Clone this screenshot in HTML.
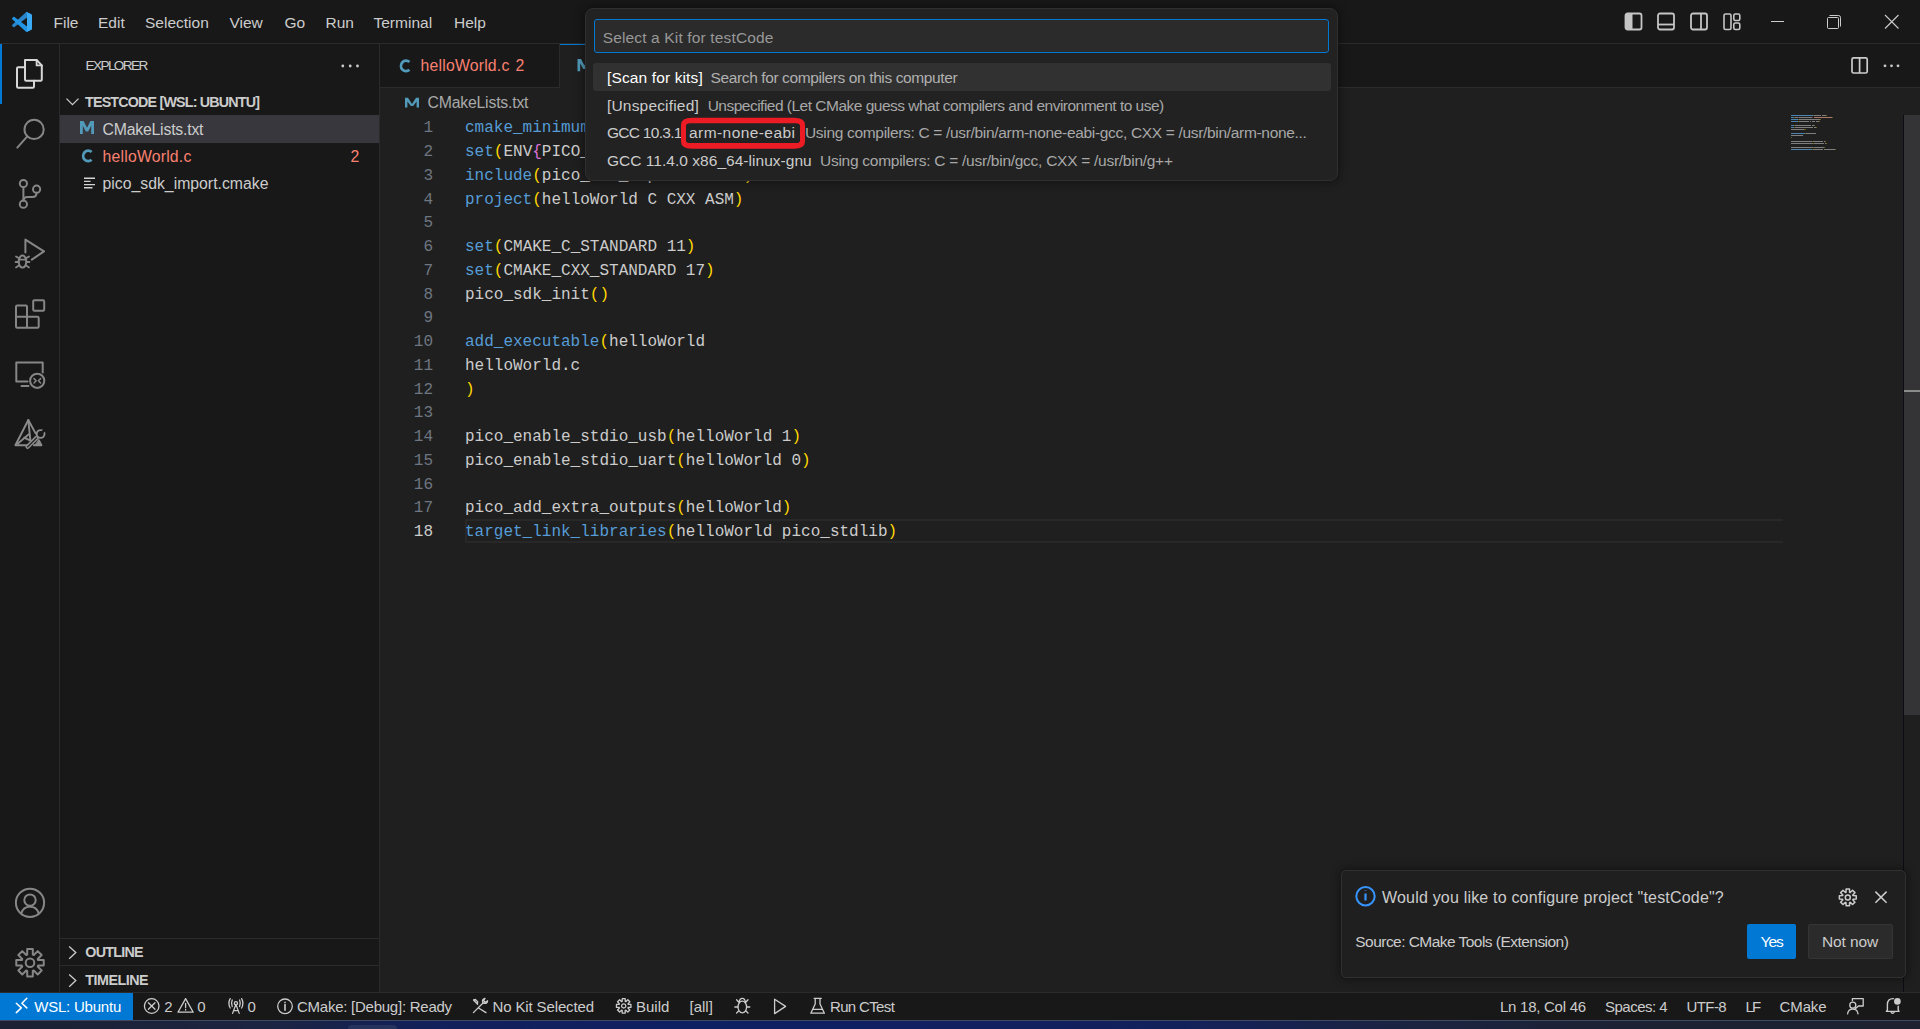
<!DOCTYPE html>
<html><head><meta charset="utf-8">
<style>
*{box-sizing:border-box;margin:0;padding:0}
html,body{width:1920px;height:1029px;overflow:hidden;background:#181818}
body{position:relative;font-family:"Liberation Sans",sans-serif;color:#cccccc}
.a{position:absolute}
.t{position:absolute;white-space:pre;line-height:1;font-family:"Liberation Sans",sans-serif}
.m{position:absolute;white-space:pre;line-height:1;font-family:"Liberation Mono",monospace;font-size:16px}
svg{position:absolute;overflow:visible}
</style></head><body>

<!-- TITLE BAR -->
<div class="a" style="left:0;top:0;width:1920px;height:43px;background:#181818"></div>
<div class="a" style="left:0;top:43px;width:1920px;height:1px;background:#2b2b2b"></div>
<svg style="left:12px;top:12px" width="20" height="20" viewBox="0 0 100 100">
  <path d="M96.46 10.8 L75.84 0.87 C73.45 -0.28 70.6 0.2 68.74 2.07 L1.34 63.59 C-0.48 65.24 -0.48 68.1 1.35 69.75 L6.86 74.76 C8.35 76.11 10.58 76.21 12.18 75 L93.48 13.33 C96.21 11.26 100.13 13.2 100.13 16.62 V16.38 C100.13 13.98 98.75 11.8 96.46 10.8 Z" fill="#2a86cc"/>
  <path d="M96.46 89.2 L75.84 99.13 C73.45 100.28 70.6 99.8 68.74 97.93 L1.34 36.41 C-0.48 34.76 -0.48 31.9 1.35 30.25 L6.86 25.24 C8.35 23.89 10.58 23.79 12.18 25 L93.48 86.67 C96.21 88.74 100.13 86.8 100.13 83.38 V83.62 C100.13 86.02 98.75 88.2 96.46 89.2 Z" fill="#2196e6"/>
  <path d="M75.84 99.14 C73.45 100.29 70.6 99.8 68.74 97.94 C71.05 100.25 75 98.61 75 95.35 V4.65 C75 1.39 71.05 -0.25 68.74 2.06 C70.6 0.2 73.45 -0.29 75.84 0.86 L96.46 10.78 C98.62 11.82 100 14.01 100 16.41 V83.59 C100 85.99 98.62 88.18 96.46 89.22 Z" fill="#3aaaf5"/>
</svg>
<div class="t" style="left:53.5px;top:14.5px;font-size:15.5px;letter-spacing:0px">File</div>
<div class="t" style="left:98px;top:14.5px;font-size:15.5px;letter-spacing:0px">Edit</div>
<div class="t" style="left:145px;top:14.5px;font-size:15.5px;letter-spacing:0px">Selection</div>
<div class="t" style="left:229.5px;top:14.5px;font-size:15.5px;letter-spacing:0px">View</div>
<div class="t" style="left:284.5px;top:14.5px;font-size:15.5px;letter-spacing:0px">Go</div>
<div class="t" style="left:325.5px;top:14.5px;font-size:15.5px;letter-spacing:0px">Run</div>
<div class="t" style="left:373.5px;top:14.5px;font-size:15.5px;letter-spacing:0px">Terminal</div>
<div class="t" style="left:454px;top:14.5px;font-size:15.5px;letter-spacing:0px">Help</div>
<!-- layout icons -->
<svg style="left:1624px;top:11.6px" width="20" height="20" viewBox="0 0 20 20" fill="none" stroke="#c5c5c5" stroke-width="1.8">
  <rect x="1.5" y="1.5" width="16" height="16" rx="2"/><rect x="1.5" y="1.5" width="7" height="16" fill="#c5c5c5" stroke="none" rx="1"/>
</svg>
<svg style="left:1657px;top:11.6px" width="20" height="20" viewBox="0 0 20 20" fill="none" stroke="#c5c5c5" stroke-width="1.8">
  <rect x="1" y="1.5" width="16" height="16" rx="2"/><line x1="1" y1="12.5" x2="17" y2="12.5"/>
</svg>
<svg style="left:1689.5px;top:11.6px" width="20" height="20" viewBox="0 0 20 20" fill="none" stroke="#c5c5c5" stroke-width="1.8">
  <rect x="1" y="1.5" width="16" height="16" rx="2"/><line x1="11" y1="1.5" x2="11" y2="17.5"/>
</svg>
<svg style="left:1723px;top:11.6px" width="20" height="20" viewBox="0 0 20 20" fill="none" stroke="#c5c5c5" stroke-width="1.6">
  <rect x="1" y="2" width="7" height="15.5" rx="1.5"/><rect x="10.8" y="2" width="6" height="6.5" rx="1.5"/><rect x="10.8" y="11" width="6" height="6.5" rx="1.5"/>
</svg>
<!-- window controls -->
<div class="a" style="left:1771px;top:21px;width:13px;height:1px;background:#cccccc"></div>
<svg style="left:1826px;top:14px" width="16" height="16" viewBox="0 0 16 16" fill="none" stroke="#cccccc" stroke-width="1">
  <rect x="1.5" y="3.5" width="11" height="11" rx="1"/><path d="M3.5 1.5 H12.5 Q14.5 1.5 14.5 3.5 V12.5"/>
</svg>
<svg style="left:1884px;top:14px" width="16" height="16" viewBox="0 0 16 16" fill="none" stroke="#cccccc" stroke-width="1.1">
  <path d="M1 1 L14.5 14.5 M14.5 1 L1 14.5"/>
</svg>

<!-- ACTIVITY BAR -->
<div class="a" style="left:0;top:44px;width:59px;height:948px;background:#181818"></div>
<div class="a" style="left:59px;top:44px;width:1px;height:948px;background:#2b2b2b"></div>
<div class="a" style="left:0;top:44px;width:2px;height:60px;background:#0078d4"></div>
<svg style="left:0;top:44px" width="59" height="948" viewBox="0 44 59 948" fill="none" stroke="#868686" stroke-width="2" stroke-linecap="round" stroke-linejoin="round">
  <!-- explorer (active) -->
  <g stroke="#d7d7d7">
    <path d="M25 60 H36.6 L41.8 65.4 V79.6 Q41.8 80.8 40.6 80.8 H26.2 Q25 80.8 25 79.6 Z"/>
    <path d="M36.6 60 V65.4 H41.8" stroke-width="1.8"/>
    <path d="M25 67.2 H18.2 Q17 67.2 17 68.4 V86.6 Q17 87.8 18.2 87.8 H32.8 Q34 87.8 34 86.6 V80.8"/>
  </g>
  <!-- search -->
  <circle cx="34.1" cy="129.4" r="9.6"/>
  <path d="M27.3 136.4 L17.3 147.6"/>
  <!-- scm -->
  <circle cx="23.4" cy="183.6" r="3.6"/>
  <circle cx="36.6" cy="189.2" r="3.6"/>
  <circle cx="23.4" cy="204.2" r="3.6"/>
  <path d="M23.4 187.2 V200.6"/>
  <path d="M36.6 192.8 Q36.6 197 32.4 197 H27.4 Q23.6 197 23.4 200.6"/>
  <!-- debug -->
  <path d="M25.4 252.4 V239.6 L44 251.4 L31.8 259.6"/>
  <ellipse cx="22.5" cy="261.6" rx="3.8" ry="6"/>
  <path d="M18.7 259.6 H26.3 M16 256.4 L18.6 258 M29 256.4 L26.4 258 M15.6 262 H18.6 M29.4 262 H26.4 M16 267.4 L18.8 265.6 M29 267.4 L26.2 265.6" stroke-width="1.8"/>
  <!-- extensions -->
  <rect x="33.2" y="300.2" width="11" height="10.6" rx="1.2"/>
  <path d="M16 306.7 Q16 305.5 17.2 305.5 H25.8 Q27 305.5 27 306.7 V316.8 H37.5 Q38.7 316.8 38.7 318 V326.6 Q38.7 327.8 37.5 327.8 H17.2 Q16 327.8 16 326.6 Z M16 316.8 H27 V327.8"/>
  <!-- remote explorer -->
  <path d="M27.5 381.6 H16.3 V362.6 H42.7 V372.6"/>
  <path d="M21.5 385.9 H28.5"/>
  <circle cx="37.2" cy="380.8" r="7.1"/>
  <path d="M34 378.6 L36.2 380.8 L34 383 M40.6 378.6 L38.4 380.8 L40.6 383" stroke-width="1.5"/>
  <!-- cmake -->
  <g stroke="#8c8c8c" stroke-width="1.9">
    <path d="M28.3 420 L15.4 445.2 H26.5 M33.8 445.2 H41.4 L38.8 440.2 M28.3 420 L35.6 433.4"/>
    <path d="M28.3 420 L30.4 440.6 M17.8 443.6 L28.8 434.2 M24.2 437.6 L30.4 440.6"/>
    <path d="M35.2 445.2 H41.2 L38.6 440.4 Z" fill="#8c8c8c" stroke-width="1"/>
    <path d="M27.6 446.8 L36.6 437.8" stroke-width="4.4"/>
    <path d="M27.6 446.8 L36.6 437.8" stroke="#181818" stroke-width="1.2"/>
    <circle cx="40.6" cy="434" r="3.9"/>
    <path d="M41.4 433.2 L45.6 429" stroke="#181818" stroke-width="2.6"/>
  </g>
  <!-- account -->
  <circle cx="30" cy="902.8" r="14.1"/>
  <circle cx="30" cy="900.1" r="5.7"/>
  <path d="M21.3 913.4 Q23.2 906.8 30 906.8 Q36.8 906.8 38.7 913.4"/>
  <!-- manage gear -->
  <g transform="translate(30 962.8)">
    <path d="M-2.80 -8.13 L-2.79 -13.72 L2.79 -13.72 L2.80 -8.13 L3.77 -7.73 L7.73 -11.67 L11.67 -7.73 L7.73 -3.77 L8.13 -2.80 L13.72 -2.79 L13.72 2.79 L8.13 2.80 L7.73 3.77 L11.67 7.73 L7.73 11.67 L3.77 7.73 L2.80 8.13 L2.79 13.72 L-2.79 13.72 L-2.80 8.13 L-3.77 7.73 L-7.73 11.67 L-11.67 7.73 L-7.73 3.77 L-8.13 2.80 L-13.72 2.79 L-13.72 -2.79 L-8.13 -2.80 L-7.73 -3.77 L-11.67 -7.73 L-7.73 -11.67 L-3.77 -7.73 Z"/>
    <circle r="4.3"/>
  </g>
</svg>

<!-- SIDEBAR -->
<div class="a" style="left:60px;top:44px;width:319px;height:948px;background:#181818"></div>
<div class="a" style="left:379px;top:44px;width:1px;height:948px;background:#2b2b2b"></div>
<div class="t" style="left:85.5px;top:59px;font-size:13.6px;letter-spacing:-1.6px">EXPLORER</div>
<svg style="left:340px;top:62px" width="20" height="8" viewBox="340 62 20 8" fill="#cccccc">
  <circle cx="342.8" cy="66" r="1.4"/><circle cx="350.2" cy="66" r="1.4"/><circle cx="357.5" cy="66" r="1.4"/>
</svg>
<svg style="left:62px;top:94px" width="20" height="16" viewBox="62 94 20 16" fill="none" stroke="#cccccc" stroke-width="1.3">
  <path d="M66.5 98.6 L72.5 104.6 L78.5 98.6"/>
</svg>
<div class="t" style="left:85px;top:94.7px;font-size:14.3px;font-weight:700;letter-spacing:-0.82px">TESTCODE [WSL: UBUNTU]</div>
<div class="a" style="left:60px;top:115px;width:319px;height:28px;background:#37373d"></div>
<svg style="left:78px;top:118px" width="20" height="80" viewBox="78 118 20 80">
  <path d="M80 134 V121 H83.6 L87 127.8 L90.4 121 H94 V134 H91.2 V125.8 L88.2 131.6 H85.8 L82.8 125.8 V134 Z" fill="#519aba"/>
  <path d="M91.6 152 A5 5.3 0 1 0 91.6 159.8" fill="none" stroke="#519aba" stroke-width="2.8"/>
  <path d="M84 178.2 H95 M84 181.4 H90.5 M84 184.6 H95 M84 187.8 H92.5" stroke="#d4d4d4" stroke-width="1.4"/>
</svg>
<div class="t" style="left:102.5px;top:121.7px;font-size:15.8px;letter-spacing:-0.2px">CMakeLists.txt</div>
<div class="t" style="left:102.5px;top:148.7px;font-size:15.8px;letter-spacing:0.2px;color:#f88070">helloWorld.c</div>
<div class="t" style="left:350.5px;top:148.7px;font-size:15.8px;color:#f88070">2</div>
<div class="t" style="left:102.5px;top:176.2px;font-size:15.8px;letter-spacing:0px">pico_sdk_import.cmake</div>
<!-- outline / timeline -->
<div class="a" style="left:60px;top:938px;width:319px;height:1px;background:#2b2b2b"></div>
<div class="a" style="left:60px;top:965px;width:319px;height:1px;background:#2b2b2b"></div>
<svg style="left:62px;top:940px" width="24" height="52" viewBox="62 940 24 52" fill="none" stroke="#cccccc" stroke-width="1.3">
  <path d="M69.2 946.5 L75.8 952.6 L69.2 958.7 M69.2 974.5 L75.8 980.6 L69.2 986.7"/>
</svg>
<div class="t" style="left:85.3px;top:945px;font-size:14.3px;font-weight:700;letter-spacing:-0.75px">OUTLINE</div>
<div class="t" style="left:85.3px;top:973px;font-size:14.3px;font-weight:700;letter-spacing:-0.5px">TIMELINE</div>

<!-- EDITOR -->
<div class="a" style="left:380px;top:44px;width:1540px;height:43px;background:#181818"></div>
<div class="a" style="left:380px;top:87px;width:1540px;height:1px;background:#2b2b2b"></div>
<div class="a" style="left:380px;top:88px;width:1540px;height:904px;background:#1f1f1f"></div>

<!-- tabs -->
<div class="a" style="left:559px;top:44px;width:1px;height:43px;background:#2b2b2b"></div>
<div class="a" style="left:560px;top:44px;width:201px;height:44px;background:#1f1f1f;border-top:1px solid #0078d4"></div>
<svg style="left:396px;top:56px" width="20" height="20" viewBox="396 56 20 20">
  <path d="M409.4 62 A5 5.3 0 1 0 409.4 69.8" fill="none" stroke="#519aba" stroke-width="2.8"/>
</svg>
<div class="t" style="left:420.5px;top:58.4px;font-size:15.8px;letter-spacing:0.2px;color:#f88070">helloWorld.c</div>
<div class="t" style="left:515.5px;top:58.4px;font-size:15.8px;color:#f88070">2</div>
<svg style="left:575px;top:56.7px" width="20" height="20" viewBox="575 56 20 20">
  <path d="M577.5 70.2 V58 H581 L584.4 64.6 L587.8 58 H591.4 V70.2 H588.6 V62.6 L585.6 68 H583.2 L580.2 62.6 V70.2 Z" fill="#519aba"/>
</svg>
<!-- editor actions -->
<svg style="left:1848px;top:54px" width="24" height="24" viewBox="1848 54 24 24" fill="none" stroke="#cccccc" stroke-width="1.7">
  <rect x="1852" y="57.8" width="15.2" height="15.2" rx="1.6"/><line x1="1859.6" y1="57.8" x2="1859.6" y2="73"/>
</svg>
<svg style="left:1880px;top:62px" width="24" height="8" viewBox="1880 62 24 8" fill="#cccccc">
  <circle cx="1885" cy="65.8" r="1.4"/><circle cx="1891.5" cy="65.8" r="1.4"/><circle cx="1898" cy="65.8" r="1.4"/>
</svg>
<!-- breadcrumbs -->
<svg style="left:402px;top:94px" width="20" height="20" viewBox="402 94 20 20">
  <path d="M405 107.5 V97.7 H408 L412 104 L416 97.7 H419 V107.5 H416.6 V101.4 L413.2 106 H410.8 L407.4 101.4 V107.5 Z" fill="#519aba"/>
</svg>
<div class="t" style="left:427.5px;top:94.5px;font-size:15.8px;letter-spacing:-0.2px;color:#a9a9a9">CMakeLists.txt</div>
<!-- scrollbar -->
<div class="a" style="left:1903px;top:115px;width:1px;height:877px;background:#0b0d12"></div>
<div class="a" style="left:1904px;top:115px;width:16px;height:600px;background:#343437"></div>
<div class="a" style="left:1904px;top:390px;width:16px;height:2px;background:#8a8c8c"></div>
<!-- current line -->
<div class="a" style="left:465px;top:519px;width:1318px;height:24px;border:2px solid #282828;border-right:0"></div>
<div class="m" style="left:400px;top:120.34px;width:33px;text-align:right;color:#6e7681">1</div>
<div class="m" style="left:465px;top:120.34px;color:#cccccc"><span style="color:#569cd6">cmake_minimum_required</span><span style="color:#ffd700">(</span>VERSION 3.13<span style="color:#ffd700">)</span></div>
<div class="m" style="left:400px;top:144.09px;width:33px;text-align:right;color:#6e7681">2</div>
<div class="m" style="left:465px;top:144.09px;color:#cccccc"><span style="color:#569cd6">set</span><span style="color:#ffd700">(</span>ENV<span style="color:#da70d6">{</span>PICO_SDK_PATH<span style="color:#da70d6">}</span> <span style="color:#ce9178">"../pico/pico-sdk"</span><span style="color:#ffd700">)</span></div>
<div class="m" style="left:400px;top:167.84px;width:33px;text-align:right;color:#6e7681">3</div>
<div class="m" style="left:465px;top:167.84px;color:#cccccc"><span style="color:#569cd6">include</span><span style="color:#ffd700">(</span>pico_sdk_import.cmake<span style="color:#ffd700">)</span></div>
<div class="m" style="left:400px;top:191.59px;width:33px;text-align:right;color:#6e7681">4</div>
<div class="m" style="left:465px;top:191.59px;color:#cccccc"><span style="color:#569cd6">project</span><span style="color:#ffd700">(</span>helloWorld C CXX ASM<span style="color:#ffd700">)</span></div>
<div class="m" style="left:400px;top:215.34px;width:33px;text-align:right;color:#6e7681">5</div>
<div class="m" style="left:400px;top:239.09px;width:33px;text-align:right;color:#6e7681">6</div>
<div class="m" style="left:465px;top:239.09px;color:#cccccc"><span style="color:#569cd6">set</span><span style="color:#ffd700">(</span>CMAKE_C_STANDARD 11<span style="color:#ffd700">)</span></div>
<div class="m" style="left:400px;top:262.84px;width:33px;text-align:right;color:#6e7681">7</div>
<div class="m" style="left:465px;top:262.84px;color:#cccccc"><span style="color:#569cd6">set</span><span style="color:#ffd700">(</span>CMAKE_CXX_STANDARD 17<span style="color:#ffd700">)</span></div>
<div class="m" style="left:400px;top:286.59px;width:33px;text-align:right;color:#6e7681">8</div>
<div class="m" style="left:465px;top:286.59px;color:#cccccc">pico_sdk_init<span style="color:#ffd700">()</span></div>
<div class="m" style="left:400px;top:310.34px;width:33px;text-align:right;color:#6e7681">9</div>
<div class="m" style="left:400px;top:334.09px;width:33px;text-align:right;color:#6e7681">10</div>
<div class="m" style="left:465px;top:334.09px;color:#cccccc"><span style="color:#569cd6">add_executable</span><span style="color:#ffd700">(</span>helloWorld</div>
<div class="m" style="left:400px;top:357.84px;width:33px;text-align:right;color:#6e7681">11</div>
<div class="m" style="left:465px;top:357.84px;color:#cccccc">helloWorld.c</div>
<div class="m" style="left:400px;top:381.59px;width:33px;text-align:right;color:#6e7681">12</div>
<div class="m" style="left:465px;top:381.59px;color:#cccccc"><span style="color:#ffd700">)</span></div>
<div class="m" style="left:400px;top:405.34px;width:33px;text-align:right;color:#6e7681">13</div>
<div class="m" style="left:400px;top:429.09px;width:33px;text-align:right;color:#6e7681">14</div>
<div class="m" style="left:465px;top:429.09px;color:#cccccc">pico_enable_stdio_usb<span style="color:#ffd700">(</span>helloWorld 1<span style="color:#ffd700">)</span></div>
<div class="m" style="left:400px;top:452.84px;width:33px;text-align:right;color:#6e7681">15</div>
<div class="m" style="left:465px;top:452.84px;color:#cccccc">pico_enable_stdio_uart<span style="color:#ffd700">(</span>helloWorld 0<span style="color:#ffd700">)</span></div>
<div class="m" style="left:400px;top:476.59px;width:33px;text-align:right;color:#6e7681">16</div>
<div class="m" style="left:400px;top:500.34px;width:33px;text-align:right;color:#6e7681">17</div>
<div class="m" style="left:465px;top:500.34px;color:#cccccc">pico_add_extra_outputs<span style="color:#ffd700">(</span>helloWorld<span style="color:#ffd700">)</span></div>
<div class="m" style="left:400px;top:524.09px;width:33px;text-align:right;color:#cccccc">18</div>
<div class="m" style="left:465px;top:524.09px;color:#cccccc"><span style="color:#569cd6">target_link_libraries</span><span style="color:#ffd700">(</span>helloWorld pico_stdlib<span style="color:#ffd700">)</span></div>
<!-- minimap -->
<div class="a" style="left:1791px;top:115px;width:22px;height:1px;background:rgba(86,156,214,0.8)"></div>
<div class="a" style="left:1813px;top:115px;width:1px;height:1px;background:rgba(255,215,0,0.35)"></div>
<div class="a" style="left:1814px;top:115px;width:7px;height:1px;background:rgba(204,204,204,0.55)"></div>
<div class="a" style="left:1822px;top:115px;width:4px;height:1px;background:rgba(204,204,204,0.55)"></div>
<div class="a" style="left:1826px;top:115px;width:1px;height:1px;background:rgba(255,215,0,0.35)"></div>
<div class="a" style="left:1791px;top:117px;width:3px;height:1px;background:rgba(86,156,214,0.8)"></div>
<div class="a" style="left:1794px;top:117px;width:1px;height:1px;background:rgba(255,215,0,0.35)"></div>
<div class="a" style="left:1795px;top:117px;width:3px;height:1px;background:rgba(204,204,204,0.55)"></div>
<div class="a" style="left:1798px;top:117px;width:1px;height:1px;background:rgba(218,112,214,0.4)"></div>
<div class="a" style="left:1799px;top:117px;width:13px;height:1px;background:rgba(204,204,204,0.55)"></div>
<div class="a" style="left:1812px;top:117px;width:1px;height:1px;background:rgba(218,112,214,0.4)"></div>
<div class="a" style="left:1814px;top:117px;width:18px;height:1px;background:rgba(206,145,120,0.8)"></div>
<div class="a" style="left:1832px;top:117px;width:1px;height:1px;background:rgba(255,215,0,0.35)"></div>
<div class="a" style="left:1791px;top:119px;width:7px;height:1px;background:rgba(86,156,214,0.8)"></div>
<div class="a" style="left:1798px;top:119px;width:1px;height:1px;background:rgba(255,215,0,0.35)"></div>
<div class="a" style="left:1799px;top:119px;width:21px;height:1px;background:rgba(204,204,204,0.55)"></div>
<div class="a" style="left:1820px;top:119px;width:1px;height:1px;background:rgba(255,215,0,0.35)"></div>
<div class="a" style="left:1791px;top:121px;width:7px;height:1px;background:rgba(86,156,214,0.8)"></div>
<div class="a" style="left:1798px;top:121px;width:1px;height:1px;background:rgba(255,215,0,0.35)"></div>
<div class="a" style="left:1799px;top:121px;width:10px;height:1px;background:rgba(204,204,204,0.55)"></div>
<div class="a" style="left:1810px;top:121px;width:1px;height:1px;background:rgba(204,204,204,0.55)"></div>
<div class="a" style="left:1812px;top:121px;width:3px;height:1px;background:rgba(204,204,204,0.55)"></div>
<div class="a" style="left:1816px;top:121px;width:3px;height:1px;background:rgba(204,204,204,0.55)"></div>
<div class="a" style="left:1819px;top:121px;width:1px;height:1px;background:rgba(255,215,0,0.35)"></div>
<div class="a" style="left:1791px;top:125px;width:3px;height:1px;background:rgba(86,156,214,0.8)"></div>
<div class="a" style="left:1794px;top:125px;width:1px;height:1px;background:rgba(255,215,0,0.35)"></div>
<div class="a" style="left:1795px;top:125px;width:16px;height:1px;background:rgba(204,204,204,0.55)"></div>
<div class="a" style="left:1812px;top:125px;width:2px;height:1px;background:rgba(204,204,204,0.55)"></div>
<div class="a" style="left:1814px;top:125px;width:1px;height:1px;background:rgba(255,215,0,0.35)"></div>
<div class="a" style="left:1791px;top:127px;width:3px;height:1px;background:rgba(86,156,214,0.8)"></div>
<div class="a" style="left:1794px;top:127px;width:1px;height:1px;background:rgba(255,215,0,0.35)"></div>
<div class="a" style="left:1795px;top:127px;width:18px;height:1px;background:rgba(204,204,204,0.55)"></div>
<div class="a" style="left:1814px;top:127px;width:2px;height:1px;background:rgba(204,204,204,0.55)"></div>
<div class="a" style="left:1816px;top:127px;width:1px;height:1px;background:rgba(255,215,0,0.35)"></div>
<div class="a" style="left:1791px;top:129px;width:13px;height:1px;background:rgba(204,204,204,0.55)"></div>
<div class="a" style="left:1804px;top:129px;width:2px;height:1px;background:rgba(255,215,0,0.35)"></div>
<div class="a" style="left:1791px;top:133px;width:14px;height:1px;background:rgba(86,156,214,0.8)"></div>
<div class="a" style="left:1805px;top:133px;width:1px;height:1px;background:rgba(255,215,0,0.35)"></div>
<div class="a" style="left:1806px;top:133px;width:10px;height:1px;background:rgba(204,204,204,0.55)"></div>
<div class="a" style="left:1791px;top:135px;width:12px;height:1px;background:rgba(204,204,204,0.55)"></div>
<div class="a" style="left:1791px;top:137px;width:1px;height:1px;background:rgba(255,215,0,0.35)"></div>
<div class="a" style="left:1791px;top:141px;width:21px;height:1px;background:rgba(204,204,204,0.55)"></div>
<div class="a" style="left:1812px;top:141px;width:1px;height:1px;background:rgba(255,215,0,0.35)"></div>
<div class="a" style="left:1813px;top:141px;width:10px;height:1px;background:rgba(204,204,204,0.55)"></div>
<div class="a" style="left:1824px;top:141px;width:1px;height:1px;background:rgba(204,204,204,0.55)"></div>
<div class="a" style="left:1825px;top:141px;width:1px;height:1px;background:rgba(255,215,0,0.35)"></div>
<div class="a" style="left:1791px;top:143px;width:22px;height:1px;background:rgba(204,204,204,0.55)"></div>
<div class="a" style="left:1813px;top:143px;width:1px;height:1px;background:rgba(255,215,0,0.35)"></div>
<div class="a" style="left:1814px;top:143px;width:10px;height:1px;background:rgba(204,204,204,0.55)"></div>
<div class="a" style="left:1825px;top:143px;width:1px;height:1px;background:rgba(204,204,204,0.55)"></div>
<div class="a" style="left:1826px;top:143px;width:1px;height:1px;background:rgba(255,215,0,0.35)"></div>
<div class="a" style="left:1791px;top:147px;width:22px;height:1px;background:rgba(204,204,204,0.55)"></div>
<div class="a" style="left:1813px;top:147px;width:1px;height:1px;background:rgba(255,215,0,0.35)"></div>
<div class="a" style="left:1814px;top:147px;width:10px;height:1px;background:rgba(204,204,204,0.55)"></div>
<div class="a" style="left:1824px;top:147px;width:1px;height:1px;background:rgba(255,215,0,0.35)"></div>
<div class="a" style="left:1791px;top:149px;width:21px;height:1px;background:rgba(86,156,214,0.8)"></div>
<div class="a" style="left:1812px;top:149px;width:1px;height:1px;background:rgba(255,215,0,0.35)"></div>
<div class="a" style="left:1813px;top:149px;width:10px;height:1px;background:rgba(204,204,204,0.55)"></div>
<div class="a" style="left:1824px;top:149px;width:11px;height:1px;background:rgba(204,204,204,0.55)"></div>
<div class="a" style="left:1835px;top:149px;width:1px;height:1px;background:rgba(255,215,0,0.35)"></div>


<!-- QUICK INPUT -->
<div class="a" style="left:585px;top:8px;width:753px;height:173px;background:#222222;border:1px solid #2f2f2f;border-radius:8px;box-shadow:0 0 8px 2px rgba(0,0,0,0.36)"></div>
<div class="a" style="left:594px;top:19px;width:735px;height:34px;background:#2b2b2b;border:1px solid #0078d4;border-radius:3px"></div>
<div class="t" style="left:602.7px;top:29.6px;font-size:15.5px;letter-spacing:0.15px;color:#989898">Select a Kit for testCode</div>
<div class="a" style="left:593px;top:63px;width:738px;height:28px;background:#313131;border-radius:3px"></div>
<div class="t" style="left:607px;top:70.4px;font-size:15.5px;letter-spacing:0.13px;color:#ffffff">[Scan for kits]</div>
<div class="t" style="left:710.6px;top:70.4px;font-size:15.5px;letter-spacing:-0.39px;color:#b0b0b0">Search for compilers on this computer</div>
<div class="t" style="left:607px;top:97.9px;font-size:15.5px;letter-spacing:0.18px;color:#cccccc">[Unspecified]</div>
<div class="t" style="left:707.7px;top:97.9px;font-size:15.5px;letter-spacing:-0.51px;color:#a8a8a8">Unspecified (Let CMake guess what compilers and environment to use)</div>
<div class="t" style="left:607px;top:125.4px;font-size:15.5px;letter-spacing:-0.72px;color:#cccccc">GCC 10.3.1</div>
<div class="t" style="left:689px;top:125.4px;font-size:15.5px;letter-spacing:0.43px;color:#cccccc">arm-none-eabi</div>
<div class="t" style="left:805px;top:125.4px;font-size:15.5px;letter-spacing:-0.32px;color:#a8a8a8">Using compilers: C = /usr/bin/arm-none-eabi-gcc, CXX = /usr/bin/arm-none...</div>
<div class="t" style="left:607px;top:152.9px;font-size:15.5px;letter-spacing:0.03px;color:#cccccc">GCC 11.4.0 x86_64-linux-gnu</div>
<div class="t" style="left:820px;top:152.9px;font-size:15.5px;letter-spacing:-0.27px;color:#a8a8a8">Using compilers: C = /usr/bin/gcc, CXX = /usr/bin/g++</div>
<svg style="left:676px;top:112px" width="135" height="42" viewBox="676 112 135 42">
  <path fill="#ed1c24" fill-rule="evenodd" d="M692 117.8 H794 Q805 117.8 805 125 V141.5 Q805 148.7 794 148.7 H692 Q681 148.7 681 141.5 V125 Q681 117.8 692 117.8 Z M690 123.3 H796 Q800 123.3 800 126 V140.5 Q800 143.1 796 143.1 H690 Q686 143.1 686 140.5 V126 Q686 123.3 690 123.3 Z"/>
</svg>

<!-- STATUS BAR -->
<div class="a" style="left:0;top:992px;width:1920px;height:28px;background:#181818;border-top:1px solid #2b2b2b"></div>
<div class="a" style="left:0;top:993px;width:133px;height:27px;background:#0078d4"></div>


<!-- status items -->
<svg style="left:0;top:992px" width="1920" height="28" viewBox="0 992 1920 28" fill="none" stroke="#cccccc" stroke-width="1.3" stroke-linecap="round" stroke-linejoin="round">
  <path d="M16.3 1003.2 L21.3 1007.9 L16.3 1012.6 M26.8 998.3 L21.9 1003.2 L26.8 1007.9" stroke="#ffffff" stroke-width="1.5"/>
  <circle cx="151.7" cy="1006" r="7.3"/>
  <path d="M148.4 1002.7 L155 1009.3 M155 1002.7 L148.4 1009.3"/>
  <path d="M185.6 998.6 L193.2 1012.2 H178 Z"/>
  <path d="M185.6 1003.5 V1007.6 M185.6 1009.3 V1010"/>
  <path d="M235.9 1004.4 L232.6 1013.4 M235.9 1004.4 L239.2 1013.4 M233.6 1010.6 H238.2"/>
  <circle cx="235.9" cy="1003.3" r="1.6"/>
  <path d="M232.2 1000 Q230.8 1003.3 232.2 1006.6 M239.6 1000 Q241 1003.3 239.6 1006.6 M230.2 998.6 Q227.6 1003.3 230.2 1008 M241.6 998.6 Q244.2 1003.3 241.6 1008"/>
  <circle cx="285" cy="1006.3" r="7.3"/>
  <path d="M285 1004.5 V1010.3 M285 1002.2 V1002.6" stroke-width="1.6"/>
  <path d="M473.4 1012.6 L483 1003 M478.5 1008 L486 1012.6 M473.5 1000 L477.6 1004.2 M473.5 1000 L475.4 999.5 L477.8 1001.9 L477.3 1003.8 Z"/>
  <path d="M483 1003 Q481.6 999.8 484.2 998.6 L485 998.4 L483.6 1000.6 L485.2 1002.2 L487.6 1000.8 Q487.6 1004.2 483 1003"/>
  <g transform="translate(623.7 1005.9)">
    <path d="M-1.53 -4.44 L-1.48 -7.25 L1.48 -7.25 L1.53 -4.44 L2.06 -4.22 L4.08 -6.17 L6.17 -4.08 L4.22 -2.06 L4.44 -1.53 L7.25 -1.48 L7.25 1.48 L4.44 1.53 L4.22 2.06 L6.17 4.08 L4.08 6.17 L2.06 4.22 L1.53 4.44 L1.48 7.25 L-1.48 7.25 L-1.53 4.44 L-2.06 4.22 L-4.08 6.17 L-6.17 4.08 L-4.22 2.06 L-4.44 1.53 L-7.25 1.48 L-7.25 -1.48 L-4.44 -1.53 L-4.22 -2.06 L-6.17 -4.08 L-4.08 -6.17 L-2.06 -4.22 Z"/>
    <circle r="2.1"/>
  </g>
  <ellipse cx="742.3" cy="1007" rx="4.3" ry="5.9"/>
  <path d="M739.2 1002.6 Q739.4 998.4 742.3 998.4 Q745.2 998.4 745.4 1002.6 M736.6 999.8 L738.6 1002 M748 999.8 L746 1002 M734.8 1007 H738 M749.8 1007 H746.6 M736.6 1013 L738.6 1011 M748 1013 L746 1011"/>
  <path d="M774.6 999.2 L785.6 1006.4 L774.6 1013.6 Z"/>
  <path d="M814.2 998.4 H821.2 M815.2 998.4 V1004 L810.8 1013.2 H824.4 L820 1004 V998.4 M812.6 1009.4 H822.6"/>
  <path d="M1852.4 998.6 H1863.2 V1006 H1858.4 L1855.6 1008.6 M1852.4 998.6 V1000.6"/>
  <circle cx="1852.8" cy="1005.2" r="3"/>
  <path d="M1847.6 1013.8 Q1848.2 1009.2 1852.8 1009.2 Q1857.4 1009.2 1858 1013.8"/>
  <path d="M1893.4 998.6 Q1887.4 998.4 1887.4 1004.6 V1010 L1886.4 1011.4 H1899 L1898.2 1010 V1006.2 M1891.2 1012.4 Q1892.6 1014.2 1894.2 1012.4" stroke-width="1.4"/>
  <circle cx="1897.4" cy="1001.4" r="3.3" fill="#cccccc" stroke="none"/>
</svg>
<div class="t" style="left:34.2px;top:999.3px;font-size:15px;letter-spacing:-0.21px;color:#ffffff">WSL: Ubuntu</div>
<div class="t" style="left:164.2px;top:999.3px;font-size:15px">2</div>
<div class="t" style="left:197.3px;top:999.3px;font-size:15px">0</div>
<div class="t" style="left:247.5px;top:999.3px;font-size:15px">0</div>
<div class="t" style="left:297px;top:999.3px;font-size:15px;letter-spacing:-0.25px">CMake: [Debug]: Ready</div>
<div class="t" style="left:492.5px;top:999.3px;font-size:15px;letter-spacing:-0.13px">No Kit Selected</div>
<div class="t" style="left:636px;top:999.3px;font-size:15px;letter-spacing:0px">Build</div>
<div class="t" style="left:689.5px;top:999.3px;font-size:15px;letter-spacing:0px">[all]</div>
<div class="t" style="left:830px;top:999.3px;font-size:15px;letter-spacing:-0.65px">Run CTest</div>
<div class="t" style="left:1500px;top:999.3px;font-size:15px;letter-spacing:-0.26px">Ln 18, Col 46</div>
<div class="t" style="left:1605px;top:999.3px;font-size:15px;letter-spacing:-0.5px">Spaces: 4</div>
<div class="t" style="left:1686.5px;top:999.3px;font-size:15px;letter-spacing:-0.58px">UTF-8</div>
<div class="t" style="left:1745.5px;top:999.3px;font-size:15px;letter-spacing:-1.8px">LF</div>
<div class="t" style="left:1779.5px;top:999.3px;font-size:15px;letter-spacing:-0.1px">CMake</div>

<!-- NOTIFICATION -->
<div class="a" style="left:1341px;top:870px;width:565px;height:107.5px;background:#1f1f1f;border:1px solid #303030;border-radius:5px;box-shadow:0 0 8px 2px rgba(0,0,0,0.36)"></div>
<svg style="left:1350px;top:882px" width="560" height="30" viewBox="1350 882 560 30" fill="none">
  <circle cx="1365.5" cy="896.2" r="9.2" stroke="#3794ff" stroke-width="2"/>
  <path d="M1365.5 893.4 V900.6 M1365.5 890.4 V891" stroke="#3794ff" stroke-width="2.2"/>
  <g transform="translate(1847.8 897.4)" stroke="#cccccc" stroke-width="1.5" stroke-linejoin="round">
    <path d="M-1.79 -5.20 L-1.71 -8.43 L1.71 -8.43 L1.79 -5.20 L2.41 -4.94 L4.75 -7.17 L7.17 -4.75 L4.94 -2.41 L5.20 -1.79 L8.43 -1.71 L8.43 1.71 L5.20 1.79 L4.94 2.41 L7.17 4.75 L4.75 7.17 L2.41 4.94 L1.79 5.20 L1.71 8.43 L-1.71 8.43 L-1.79 5.20 L-2.41 4.94 L-4.75 7.17 L-7.17 4.75 L-4.94 2.41 L-5.20 1.79 L-8.43 1.71 L-8.43 -1.71 L-5.20 -1.79 L-4.94 -2.41 L-7.17 -4.75 L-4.75 -7.17 L-2.41 -4.94 Z"/>
    <circle r="2.5"/>
  </g>
  <path d="M1875.4 891.6 L1886.6 902.8 M1886.6 891.6 L1875.4 902.8" stroke="#cccccc" stroke-width="1.5"/>
</svg>
<div class="t" style="left:1382px;top:890.3px;font-size:16px;letter-spacing:0.19px">Would you like to configure project "testCode"?</div>
<div class="t" style="left:1355.3px;top:934px;font-size:15.5px;letter-spacing:-0.54px">Source: CMake Tools (Extension)</div>
<div class="a" style="left:1747px;top:924px;width:49px;height:34.5px;background:#0078d4;border-radius:2px"></div>
<div class="t" style="left:1760.5px;top:933.9px;font-size:15.5px;color:#ffffff;letter-spacing:-1px">Yes</div>
<div class="a" style="left:1808px;top:924px;width:85px;height:34.5px;background:#2b2b2b;border:1px solid #353535;border-radius:2px"></div>
<div class="t" style="left:1822px;top:934.4px;font-size:15.5px;color:#cccccc;letter-spacing:-0.1px">Not now</div>

<!-- TASKBAR -->
<div class="a" style="left:0;top:1020px;width:1920px;height:9px;background:linear-gradient(90deg,#1c2233 0%,#1b2441 14%,#12205a 22%,#0e1f62 36%,#0f1f60 50%,#13215a 62%,#1a2342 72%,#1c2233 85%,#1d2130 100%)"></div>
<div class="a" style="left:0;top:1020px;width:1920px;height:1px;background:#414a63"></div>
<div class="a" style="left:348px;top:1025px;width:49px;height:8px;background:#26335c;border-radius:5px"></div>
</body></html>
